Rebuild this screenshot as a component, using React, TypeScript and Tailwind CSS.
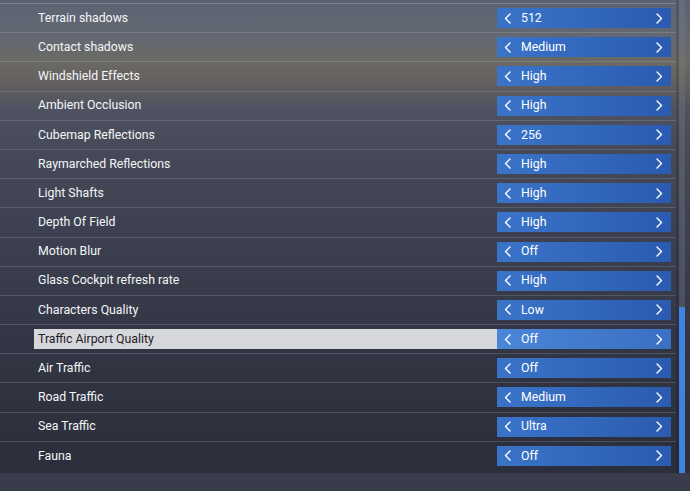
import React from "react";

const rows: [string, string][] = [
  ["Terrain shadows", "512"],
  ["Contact shadows", "Medium"],
  ["Windshield Effects", "High"],
  ["Ambient Occlusion", "High"],
  ["Cubemap Reflections", "256"],
  ["Raymarched Reflections", "High"],
  ["Light Shafts", "High"],
  ["Depth Of Field", "High"],
  ["Motion Blur", "Off"],
  ["Glass Cockpit refresh rate", "High"],
  ["Characters Quality", "Low"],
  ["Traffic Airport Quality", "Off"],
  ["Air Traffic", "Off"],
  ["Road Traffic", "Medium"],
  ["Sea Traffic", "Ultra"],
  ["Fauna", "Off"],
];

function Chevron({ dir }: { dir: "l" | "r" }) {
  return (
    <svg width="7" height="11" viewBox="0 0 7 11" className="shrink-0">
      <polyline
        points={dir === "l" ? "6,1 1.5,5.5 6,10" : "1,1 5.5,5.5 1,10"}
        fill="none"
        stroke="white"
        strokeWidth="1.4"
        strokeLinecap="round"
        strokeLinejoin="round"
      />
    </svg>
  );
}

export default function App() {
  return (
    <div
      className="w-[690px] h-[491px] overflow-hidden flex flex-col bg-[linear-gradient(180deg,#5b6373_0%,#646871_8%,#6b6963_13%,#625f5e_17%,#4f5361_22%,#464a58_30%,#3c4050_48%,#333745_68%,#2d313d_88%,#2b2e3a_100%)]"
      style={{ fontFamily: "Roboto, 'Liberation Sans', sans-serif" }}
    >
      <div className="flex h-[473px]">
        <div className="w-[676px] pt-[3px]">
          {rows.map(([label, value], i) => {
            const hl = i === 11;
            return (
              <div
                key={label}
                className={`h-[29.2px] flex items-start pt-[4px] ${i === 0 ? "border-t border-[#7b818c]" : "border-t border-[rgba(255,255,255,0.14)]"}`}
              >
                <div
                  className={`ml-[34px] w-[463px] h-[20px] flex items-center pl-[4px] text-[12.3px] ${hl ? "bg-[#d6d7da] text-[#1e2128]" : "text-[#f5f6f8]"}`}
                >
                  {label}
                </div>
                <div
                  className={`w-[174px] h-[20px] flex items-center pl-[7px] pr-[8px] text-[12.3px] text-white ${hl ? "bg-[linear-gradient(90deg,#4a86d8,#3a6fc4)]" : "bg-[linear-gradient(90deg,#3a74c9,#2a5bb0)]"}`}
                >
                  <Chevron dir="l" />
                  <span className="ml-[10px] flex-1">{value}</span>
                  <Chevron dir="r" />
                </div>
              </div>
            );
          })}
        </div>
        <div className="w-[14px] flex">
          <div className="w-[3px] bg-[rgba(0,0,0,0.12)]" />
          <div className="w-[6px] flex flex-col bg-[rgba(120,125,135,0.35)]">
            <div className="h-[307px]" />
            <div className="flex-1 bg-[#3f82e0]" />
          </div>
        </div>
      </div>
      <div className="flex-1 bg-[#383c4b]" />
    </div>
  );
}
